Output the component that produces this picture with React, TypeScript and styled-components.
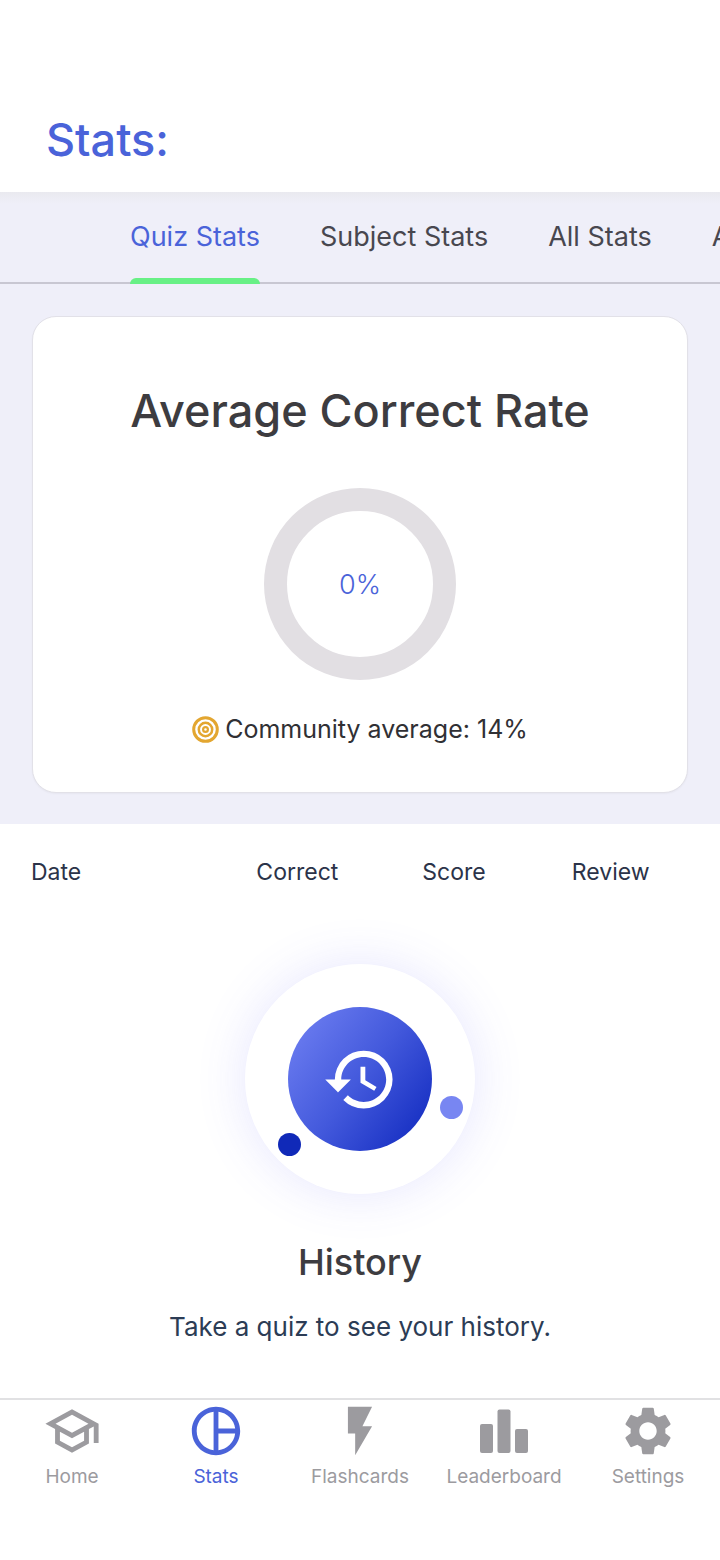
import React from "react";
import styled, { createGlobalStyle } from "styled-components";
import {
  MdFlashOn,
  MdHistory,
  MdOutlineSchool,
  MdPieChartOutline,
  MdSettings,
} from "react-icons/md";

const colors = {
  primary: "#4a63d9",
  lavender: "#efeff9",
  heading: "#3d3c40",
  navy: "#2b3349",
  slate: "#2c3c55",
  muted: "#9c9b9f",
};

const GlobalStyle = createGlobalStyle`
  *, *::before, *::after { box-sizing: border-box; }
  body {
    margin: 0;
    background: #fff;
    font-family: Inter, "Liberation Sans", sans-serif;
    color: ${colors.heading};
  }
  h1, h2, h3, p { margin: 0; }
  button { font: inherit; color: inherit; background: none; border: 0; padding: 0; cursor: pointer; }
  a { color: inherit; text-decoration: none; }
`;

const Screen = styled.div`
  display: flex;
  flex-direction: column;
  min-height: 100vh;
`;

const Header = styled.header`
  padding: 108px 46px 20px;
  background: #fff;
`;

const Title = styled.h1`
  font-size: 45px;
  line-height: 64px;
  font-weight: 500;
  color: ${colors.primary};
`;

const Panel = styled.section`
  background: linear-gradient(#e9e9ef, ${colors.lavender} 12px);
`;

const TabBar = styled.div`
  display: flex;
  gap: 60px;
  height: 92px;
  padding-left: 130px;
  overflow-x: auto;
  overflow-y: hidden;
  scrollbar-width: none;
  box-shadow: inset 0 -2px 0 #c8c7d2;
`;

const Tab = styled.button<{ $active?: boolean }>`
  display: flex;
  flex: none;
  flex-direction: column;
  justify-content: space-between;
  padding-top: 28px;
  font-size: 27px;
  line-height: 34px;
  white-space: nowrap;
  color: ${(p) => (p.$active ? colors.primary : "#48474f")};

  &::after {
    content: "";
    width: 100%;
    height: 6px;
    border-radius: 6px 6px 0 0;
    background: ${(p) => (p.$active ? "#68f086" : "transparent")};
  }
`;

const CardArea = styled.div`
  padding: 32px 32px 31px;
`;

const Card = styled.article`
  display: flex;
  flex-direction: column;
  align-items: center;
  padding: 64px 24px 46px;
  border: 1px solid #e2e1e8;
  border-radius: 24px;
  background: #fff;
  box-shadow: 0 1px 2px rgba(0, 0, 0, 0.04);
`;

const CardTitle = styled.h2`
  font-size: 45px;
  line-height: 60px;
  font-weight: 500;
`;

const Ring = styled.div`
  display: grid;
  place-items: center;
  width: 192px;
  height: 192px;
  margin: 47px 0 32px;
  border: 23px solid #e2dfe3;
  border-radius: 50%;
  font-size: 27px;
  font-weight: 300;
  color: ${colors.primary};
`;

const Community = styled.p`
  display: flex;
  align-items: center;
  gap: 6px;
  font-size: 25px;
  line-height: 34px;
  color: #303034;
`;

const HistoryTable = styled.table`
  width: calc(100% - 62px);
  margin: 31px 31px 0;
  table-layout: fixed;
  border-collapse: collapse;
`;

const ColumnHead = styled.th<{ $first?: boolean }>`
  width: ${(p) => (p.$first ? "calc(200% / 7)" : "auto")};
  padding: 0;
  font-size: 23px;
  line-height: 34px;
  font-weight: 400;
  text-align: ${(p) => (p.$first ? "left" : "center")};
  color: ${colors.navy};
`;

const Empty = styled.section`
  display: flex;
  flex-direction: column;
  align-items: center;
  padding: 75px 24px 0;
`;

const Halo = styled.div`
  position: relative;
  display: grid;
  place-items: center;
  width: 230px;
  height: 230px;
  border-radius: 50%;
  background: #fff;
  box-shadow: 0 0 50px rgba(90, 90, 250, 0.15);
`;

const Disc = styled.div`
  display: grid;
  place-items: center;
  width: 144px;
  height: 144px;
  border-radius: 50%;
  background: linear-gradient(127deg, #6b7cf0 8%, #4359dc 50%, #122bc0 95%);
  color: #fff;
`;

const Dot = styled.span<{ $color: string; $x: number; $y: number }>`
  position: absolute;
  left: ${(p) => p.$x}px;
  top: ${(p) => p.$y}px;
  width: 23px;
  height: 23px;
  border-radius: 50%;
  background: ${(p) => p.$color};
`;

const EmptyTitle = styled.h3`
  margin-top: 43px;
  font-size: 36px;
  line-height: 50px;
  font-weight: 500;
`;

const EmptyText = styled.p`
  margin-top: 22px;
  font-size: 26px;
  line-height: 36px;
  color: ${colors.slate};
`;

const NavBar = styled.nav`
  display: grid;
  grid-template-columns: repeat(5, 1fr);
  height: 162px;
  margin-top: auto;
  padding-top: 2px;
  border-top: 2px solid #e1e1e3;
  background: #fff;
`;

const NavItem = styled.a<{ $active?: boolean }>`
  display: flex;
  flex-direction: column;
  align-items: center;
  gap: 4px;
  font-size: 19px;
  line-height: 26px;
  color: ${(p) => (p.$active ? colors.primary : colors.muted)};
`;

const TargetIcon = () => (
  <svg width="27" height="27" viewBox="0 0 27 27" fill="none" stroke="#e3a630" aria-hidden="true">
    <circle cx="13.5" cy="13.5" r="11.8" strokeWidth="3" />
    <circle cx="13.5" cy="13.5" r="6.7" strokeWidth="2.5" />
    <circle cx="13.5" cy="13.5" r="2.4" strokeWidth="2.2" />
  </svg>
);

const BarsIcon = () => (
  <svg width="58" height="58" viewBox="0 0 58 58" fill="currentColor" aria-hidden="true">
    <rect x="5" y="22" width="13" height="29" rx="2" />
    <rect x="22.5" y="7.5" width="13" height="43.5" rx="2" />
    <rect x="40" y="27" width="13" height="24" rx="2" />
  </svg>
);

const tabs = ["Quiz Stats", "Subject Stats", "All Stats", "Awards"];

const navItems = [
  { label: "Home", icon: <MdOutlineSchool size={58} /> },
  { label: "Stats", icon: <MdPieChartOutline size={58} /> },
  { label: "Flashcards", icon: <MdFlashOn size={58} /> },
  { label: "Leaderboard", icon: <BarsIcon /> },
  { label: "Settings", icon: <MdSettings size={58} /> },
];

export default function App() {
  return (
    <Screen>
      <GlobalStyle />
      <Header>
        <Title>Stats:</Title>
      </Header>
      <main>
        <Panel>
          <TabBar role="tablist">
            {tabs.map((tab, i) => (
              <Tab key={tab} role="tab" aria-selected={i === 0} $active={i === 0}>
                {tab}
              </Tab>
            ))}
          </TabBar>
          <CardArea>
            <Card>
              <CardTitle>Average Correct Rate</CardTitle>
              <Ring>0%</Ring>
              <Community>
                <TargetIcon />
                Community average: 14%
              </Community>
            </Card>
          </CardArea>
        </Panel>
        <HistoryTable>
          <thead>
            <tr>
              <ColumnHead $first>Date</ColumnHead>
              <ColumnHead>Correct</ColumnHead>
              <ColumnHead>Score</ColumnHead>
              <ColumnHead>Review</ColumnHead>
            </tr>
          </thead>
        </HistoryTable>
        <Empty>
          <Halo>
            <Disc>
              <MdHistory size={77} />
            </Disc>
            <Dot $color="#1029b8" $x={33} $y={169} />
            <Dot $color="#7886f2" $x={195} $y={132} />
          </Halo>
          <EmptyTitle>History</EmptyTitle>
          <EmptyText>Take a quiz to see your history.</EmptyText>
        </Empty>
      </main>
      <NavBar>
        {navItems.map(({ label, icon }) => (
          <NavItem key={label} href="#" $active={label === "Stats"}>
            {icon}
            {label}
          </NavItem>
        ))}
      </NavBar>
    </Screen>
  );
}
